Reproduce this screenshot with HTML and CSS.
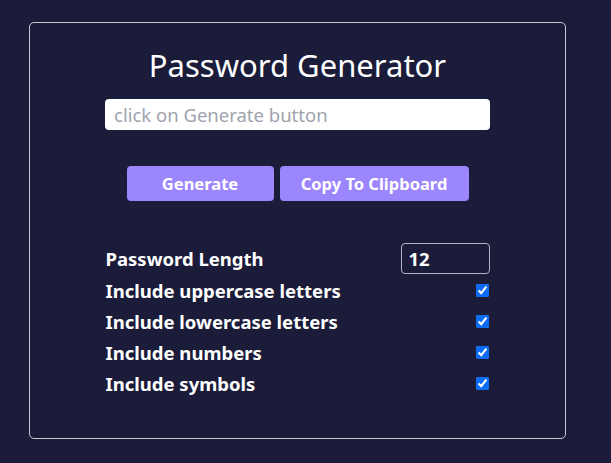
FILE: index.html
```html
<!DOCTYPE html>
<html>
<head>
<meta charset="utf-8">
<link rel="stylesheet" href="styles.css">
</head>
<body>
<div class="card">
  <h1 class="title">Password Generator</h1>
  <input class="output" type="text" placeholder="click on Generate button">
  <div class="buttons">
    <button class="btn btn-gen">Generate</button>
    <button class="btn btn-copy">Copy To Clipboard</button>
  </div>
  <div class="options">
    <div class="row row-length">
      <label>Password Length</label>
      <input class="num" type="number" value="12">
    </div>
    <div class="row">
      <label>Include uppercase letters</label>
      <input class="chk" type="checkbox" checked>
    </div>
    <div class="row">
      <label>Include lowercase letters</label>
      <input class="chk" type="checkbox" checked>
    </div>
    <div class="row">
      <label>Include numbers</label>
      <input class="chk" type="checkbox" checked>
    </div>
    <div class="row">
      <label>Include symbols</label>
      <input class="chk" type="checkbox" checked>
    </div>
  </div>
</div>
</body>
</html>
```

FILE: styles.css
```css
html, body {
  margin: 0;
  padding: 0;
  background: #1b1b3a;
  height: 100%;
}
body {
  font-family: "Noto Sans", "Open Sans", sans-serif;
  color: #ffffff;
}
.card {
  box-sizing: border-box;
  margin: 22px 0 0 29px;
  width: 537px;
  height: 417px;
  border: 1px solid #c9c9d6;
  border-radius: 5px;
  display: flex;
  flex-direction: column;
  align-items: center;
  padding-top: 20px;
}
.title {
  margin: 0;
  font-size: 31px;
  font-weight: 400;
  line-height: 44px;
  color: #ffffff;
}
.output {
  box-sizing: border-box;
  margin-top: 12px;
  width: 385px;
  height: 31px;
  border: none;
  border-radius: 4px;
  background: #ffffff;
  padding: 0 9px;
  font-family: inherit;
  font-size: 18.5px;
  color: #333;
  outline: none;
}
.output::placeholder {
  color: #9ea3ad;
}
.buttons {
  margin-top: 36px;
  display: flex;
  gap: 6px;
}
.btn {
  height: 35px;
  border: none;
  border-radius: 4px;
  background: #9b86fd;
  color: #ffffff;
  font-family: inherit;
  font-weight: 700;
  font-size: 16.5px;
  padding: 0;
}
.btn-gen { width: 147px; }
.btn-copy { width: 189px; }
.options {
  margin-top: 41px;
  width: 384px;
  display: flex;
  flex-direction: column;
}
.row {
  display: flex;
  align-items: center;
  justify-content: space-between;
  height: 31px;
}
.row-length {
  height: 33px;
}
.row label {
  font-weight: 700;
  font-size: 18.5px;
}
.num {
  box-sizing: border-box;
  width: 89px;
  height: 31px;
  background: transparent;
  border: 1px solid #b4b4c4;
  border-radius: 4px;
  color: #ffffff;
  font-family: inherit;
  font-weight: 700;
  font-size: 18.5px;
  padding: 0 7px;
  outline: none;
}
.num::-webkit-inner-spin-button,
.num::-webkit-outer-spin-button {
  -webkit-appearance: none;
  margin: 0;
}
.chk {
  margin: 0 1px 0 0;
  width: 13px;
  height: 13px;
  accent-color: #0b6cf5;
}
```
